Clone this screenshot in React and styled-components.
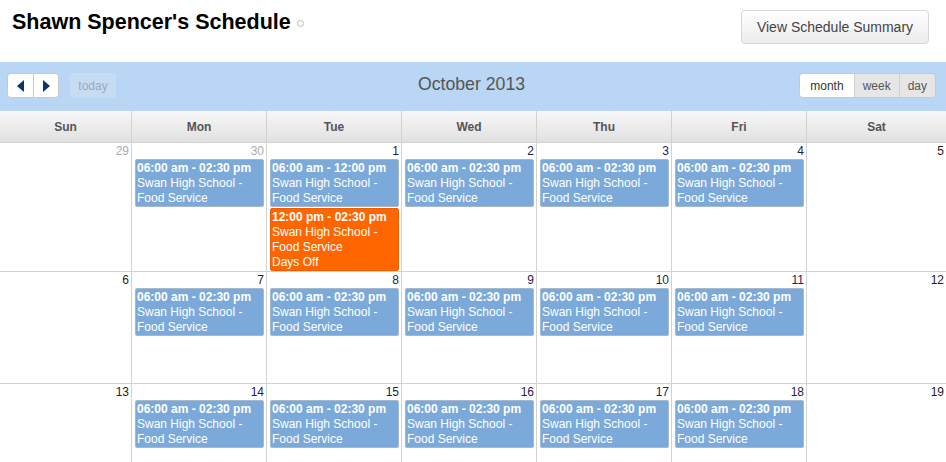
import React from 'react';
import styled, { createGlobalStyle } from 'styled-components';

const Global = createGlobalStyle`
  html, body {
    margin: 0;
    padding: 0;
    background: #fff;
    font-family: 'Liberation Sans', Arial, sans-serif;
    overflow: hidden;
  }
`;

const Page = styled.div`
  width: 946px;
`;

const Header = styled.div`
  height: 62px;
  display: flex;
  justify-content: space-between;
  align-items: flex-start;
  padding: 0 17px 0 12px;
  box-sizing: border-box;
`;

const Title = styled.h1`
  margin: 10px 0 0;
  font-size: 21.5px;
  font-weight: bold;
  color: #000;
  display: flex;
  align-items: center;
  gap: 6px;
  line-height: 24px;
`;

const Ring = styled.span`
  width: 5px;
  height: 5px;
  border: 1.5px solid #bbb;
  border-radius: 50%;
  margin-top: 3px;
`;

const SummaryButton = styled.button`
  margin-top: 10px;
  height: 34px;
  width: 188px;
  border: 1px solid #d6d6d6;
  border-radius: 4px;
  background: linear-gradient(#fff, #ececec);
  font-family: 'Liberation Sans', Arial, sans-serif;
  font-size: 14px;
  color: #444;
`;

const Toolbar = styled.div`
  height: 49px;
  background: #b9d6f4;
  display: grid;
  grid-template-columns: 1fr auto 1fr;
  align-items: center;
  padding: 0 10px 0 7px;
  box-sizing: border-box;
`;

const Left = styled.div`
  display: flex;
  align-items: center;
  gap: 11px;
  margin-top: -2px;
`;

const Right = styled.div`
  display: flex;
  justify-content: flex-end;
  margin-top: -2px;
`;

const Group = styled.div`
  display: flex;
  border: 1px solid #c9c9c9;
  border-radius: 4px;
  overflow: hidden;
  height: 25px;
  box-sizing: border-box;
`;

const ArrowButton = styled.button`
  width: 25px;
  border: none;
  background: #fff;
  padding: 0;
  display: flex;
  align-items: center;
  justify-content: center;
  & + & {
    border-left: 1px solid #c9c9c9;
  }
`;

const TodayButton = styled.div`
  height: 25px;
  width: 46px;
  border-radius: 4px;
  background: #c6dcf2;
  color: #9aaabb;
  font-size: 12px;
  display: flex;
  align-items: center;
  justify-content: center;
`;

const MonthTitle = styled.h2`
  margin: -5px 0 0;
  font-size: 17.7px;
  font-weight: normal;
  color: #555;
`;

const ViewButton = styled.div`
  padding: 0 ${p => (p.$active ? 10 : 8)}px;
  display: flex;
  align-items: center;
  font-size: 12px;
  color: ${p => (p.$active ? '#333' : '#555')};
  background: ${p => (p.$active ? '#fff' : '#e6e6e6')};
  & + & {
    border-left: 1px solid #d2d2d2;
  }
`;

const COLS = '131px repeat(5, 135px) 1fr';

const DayHeader = styled.div`
  display: grid;
  grid-template-columns: ${COLS};
  height: 31px;
  background: linear-gradient(#f7f7f7, #e1e1e1);
  border-bottom: 1px solid #d2d2d2;
`;

const DayName = styled.div`
  display: flex;
  align-items: center;
  justify-content: center;
  font-size: 12px;
  font-weight: bold;
  color: #555;
  & + & {
    border-left: 1px solid #d2d2d2;
  }
`;

const Week = styled.div`
  display: grid;
  grid-template-columns: ${COLS};
  min-height: ${p => p.$h}px;
  border-bottom: 1px solid #d2d2d2;
`;

const Cell = styled.div`
  display: flex;
  flex-direction: column;
  gap: 1px;
  padding: 0 2px 0 3px;
  & + & {
    border-left: 1px solid #d2d2d2;
  }
`;

const DayNum = styled.div`
  text-align: right;
  font-size: 12px;
  line-height: 14px;
  padding: 1px 0 0;
  color: ${p => (p.$other ? '#aaa' : p.$weekend ? '#222' : '#221c50')};
`;

const Event = styled.div`
  background: ${p => (p.$off ? '#ff6600' : '#7baada')};
  border: 1px solid ${p => (p.$off ? '#ee5f00' : '#a6b8cc')};
  border-radius: 2px;
  color: #fff;
  font-size: 12px;
  line-height: 15px;
  padding: 1px 1px 0;
`;

const Time = styled.div`
  font-weight: bold;
`;

const Arrow = ({ dir }) => (
  <svg width="8" height="12" viewBox="0 0 8 12">
    <path d={dir === 'left' ? 'M7 0 L0 6 L7 12 Z' : 'M1 0 L8 6 L1 12 Z'} fill="#0b3470" />
  </svg>
);

const Shift = ({ time = '06:00 am - 02:30 pm', off }) => (
  <Event $off={off}>
    <Time>{time}</Time>
    <div>Swan High School -</div>
    <div>Food Service</div>
    {off && <div>Days Off</div>}
  </Event>
);

const days = ['Sun', 'Mon', 'Tue', 'Wed', 'Thu', 'Fri', 'Sat'];

const weeks = [
  { h: 128, nums: [29, 30, 1, 2, 3, 4, 5], other: [0, 1] },
  { h: 111, nums: [6, 7, 8, 9, 10, 11, 12], other: [] },
  { h: 111, nums: [13, 14, 15, 16, 17, 18, 19], other: [] },
];

export default function App() {
  return (
    <Page>
      <Global />
      <Header>
        <Title>
          Shawn Spencer's Schedule <Ring />
        </Title>
        <SummaryButton>View Schedule Summary</SummaryButton>
      </Header>
      <Toolbar>
        <Left>
          <Group>
            <ArrowButton><Arrow dir="left" /></ArrowButton>
            <ArrowButton><Arrow dir="right" /></ArrowButton>
          </Group>
          <TodayButton>today</TodayButton>
        </Left>
        <MonthTitle>October 2013</MonthTitle>
        <Right>
          <Group>
            <ViewButton $active>month</ViewButton>
            <ViewButton>week</ViewButton>
            <ViewButton>day</ViewButton>
          </Group>
        </Right>
      </Toolbar>
      <DayHeader>
        {days.map(d => (
          <DayName key={d}>{d}</DayName>
        ))}
      </DayHeader>
      {weeks.map((w, wi) => (
        <Week key={wi} $h={w.h}>
          {w.nums.map((n, i) => {
            const weekend = i === 0 || i === 6;
            return (
              <Cell key={n}>
                <DayNum $other={w.other.includes(i)} $weekend={weekend}>{n}</DayNum>
                {!weekend && wi === 0 && i === 2 ? (
                  <>
                    <Shift time="06:00 am - 12:00 pm" />
                    <Shift time="12:00 pm - 02:30 pm" off />
                  </>
                ) : (
                  !weekend && <Shift />
                )}
              </Cell>
            );
          })}
        </Week>
      ))}
    </Page>
  );
}
